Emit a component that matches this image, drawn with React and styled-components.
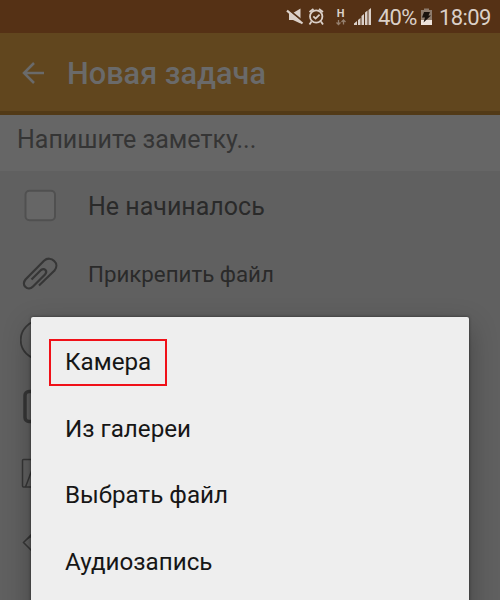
import React from "react";
import styled, { createGlobalStyle } from "styled-components";

const GlobalStyle = createGlobalStyle`
  * {
    box-sizing: border-box;
  }
  body {
    margin: 0;
    overflow: hidden;
  }
`;

const Screen = styled.div`
  position: relative;
  width: 500px;
  height: 600px;
  overflow: hidden;
  background: #606060;
  font-family: Roboto, "Noto Sans", sans-serif;
`;

const StatusBar = styled.div`
  display: flex;
  justify-content: flex-end;
  height: 33px;
  padding-right: 8px;
  background: #553115;
  color: #dbd0c8;
`;

const StatusIcons = styled.svg`
  width: 92px;
  height: 33px;
`;

const StatusText = styled.span`
  width: ${(props) => props.$width}px;
  font-size: 22px;
  line-height: 35px;
  letter-spacing: ${(props) => props.$spacing || 0}px;
  white-space: nowrap;
`;

const Battery = styled.svg`
  width: 19px;
  height: 33px;
`;

const Header = styled.header`
  display: flex;
  align-items: center;
  height: 82px;
  padding: 4px 0 0 21px;
  border-bottom: 4px solid #523a17;
  background: #61461e;
`;

const BackIcon = styled.svg`
  width: 25px;
  height: 24px;
  margin-right: 21px;
`;

const Title = styled.h1`
  margin: 0;
  color: #6a6a6a;
  font-size: 30.7px;
  font-weight: 500;
  line-height: 38px;
  white-space: nowrap;
`;

const Note = styled.div`
  height: 56px;
  padding-left: 17px;
  background: #666;
  color: #353535;
  font-size: 25px;
  line-height: 49px;
`;

const List = styled.div`
  display: flex;
  flex-direction: column;
`;

const Row = styled.div`
  display: flex;
  align-items: center;
  height: 67px;
  padding-left: 20px;
`;

const RowIcon = styled.svg`
  width: 40px;
  height: 67px;
  margin-right: 28px;
  fill: none;
  stroke: #363636;
  stroke-width: 2;
`;

const RowText = styled.span`
  padding-top: ${(props) => props.$top || 0}px;
  color: #2a2a2a;
  font-size: ${(props) => props.$size}px;
  line-height: 32px;
  white-space: nowrap;
`;

const Dialog = styled.div`
  position: absolute;
  top: 317px;
  left: 31px;
  display: flex;
  flex-direction: column;
  width: 438px;
  height: 320px;
  padding: 12.4px 18px;
  border-radius: 2px;
  background: #eee;
  box-shadow: 0 10px 28px rgba(0, 0, 0, 0.3), 0 0 3px rgba(0, 0, 0, 0.5);
`;

const MenuItem = styled.div`
  display: flex;
  align-items: center;
  height: 66.6px;
`;

const Label = styled.span`
  padding: 0 14px 1px;
  border: 2px solid ${(props) => (props.$marked ? "#f01018" : "transparent")};
  color: #161616;
  font-size: 24.2px;
  line-height: 42px;
  white-space: nowrap;
`;

const items = [
  { text: "Камера", marked: true },
  { text: "Из галереи" },
  { text: "Выбрать файл" },
  { text: "Аудиозапись" },
];

const App = () => {
  return (
    <>
      <GlobalStyle />
      <Screen>
        <StatusBar>
          <StatusIcons viewBox="286 0 92 33">
            {/* muted speaker */}
            <path d="M289 13h4l7.500-4.500v15L293 20h-4z" fill="#dbd0c8" />
            <path d="M288 9.300L304 22.300" stroke="#553115" strokeWidth="2" />
            <path d="M287 10.700L302.500 23.500" stroke="#dbd0c8" strokeWidth="2.200" />
            {/* alarm clock */}
            <g fill="none" stroke="#dbd0c8" strokeWidth="1.800">
              <circle cx="316.200" cy="16.500" r="6.200" />
              <path d="M313.300 16.300l2.300 2.300 4-4M309.500 12l4-3M323 12l-4-3M311.500 21.500l-2 3M321 21.500l2 3" />
            </g>
            <text x="336.800" y="17" fontSize="11" fontWeight="700" fill="#dbd0c8">H</text>
            <path d="M338.500 20v4M336.500 22.500l2 2 2-2M343.500 24.500v-4M341.500 22l2-2 2 2" fill="none" stroke="#95806f" strokeWidth="1.300" />
            <path d="M354 25v-1.500l3-2.500v4zM358 25v-5l2.500-2v7zM361.500 25v-9l2.500-2v11zM365 25V12.500l2.500-2V25zM368.500 25V10l2.500-2V25z" fill="#dbd0c8" />
          </StatusIcons>
          <StatusText $width={42} $spacing={-0.8}>40%</StatusText>
          <Battery viewBox="420 0 19 33">
            <path d="M424 8.500h5v1.500h3v15h-11v-15h3z" fill="#8d7b6c" />
            <path d="M421 20h11v5h-11z" fill="#eee4dc" />
            <path d="M424 12h6l-1.500 3.500h2.500l-7.500 7 1.500-5h-3z" fill="#18120d" />
          </Battery>
          <StatusText $width={53} $spacing={-0.6}>18:09</StatusText>
        </StatusBar>
        <Header>
          <BackIcon viewBox="0 0 25 24" fill="none" stroke="#6a6a6a" strokeWidth="2.500">
            <path d="M13 1L3 11l10 10M3 11h20" />
          </BackIcon>
          <Title>Новая задача</Title>
        </Header>
        <Note>Напишите заметку...</Note>
        <List>
          <Row>
            <RowIcon viewBox="20 171 40 67">
              <rect x="25.500" y="190.700" width="29.500" height="29.500" rx="4" fill="#666" stroke="#505050" />
            </RowIcon>
            <RowText $size={25} $top={5}>Не начиналось</RowText>
          </Row>
          <Row>
            <RowIcon viewBox="20 238 40 67">
              <path d="M39 285.500L54.500 270.500C57 267.500 57 263.500 54.200 261C51.500 258 47 258 44 260.800L25.500 279.500C23.500 282 23.500 285 25.500 287C27.500 289 30.500 289 33 286.500L45 274.500C48 271 44.500 267.500 41 270L31.500 279.500" strokeWidth="2.200" />
            </RowIcon>
            <RowText $size={22.3} $top={4}>Прикрепить файл</RowText>
          </Row>
          <Row>
            <RowIcon viewBox="20 305 40 67">
              <circle cx="40" cy="340" r="19.300" strokeWidth="1.800" />
            </RowIcon>
          </Row>
          <Row>
            <RowIcon viewBox="20 372 40 67">
              <rect x="25" y="391.500" width="31" height="30" rx="4" strokeWidth="3.500" />
            </RowIcon>
          </Row>
          <Row>
            <RowIcon viewBox="20 439 40 67">
              <rect x="22.500" y="459.500" width="34" height="27.500" rx="1" strokeWidth="1.500" />
              <path d="M25.500 487l8-21" strokeWidth="1.500" />
            </RowIcon>
          </Row>
          <Row>
            <RowIcon viewBox="20 506 40 67">
              <path d="M35 531L23.500 542.500 35 554" strokeWidth="1.500" />
              <path d="M25 541l10-11v5z" fill="#363636" stroke="none" />
            </RowIcon>
          </Row>
        </List>
        <Dialog>
          {items.map((item) => (
            <MenuItem key={item.text}>
              <Label $marked={item.marked}>{item.text}</Label>
            </MenuItem>
          ))}
        </Dialog>
      </Screen>
    </>
  );
};

export default App;
